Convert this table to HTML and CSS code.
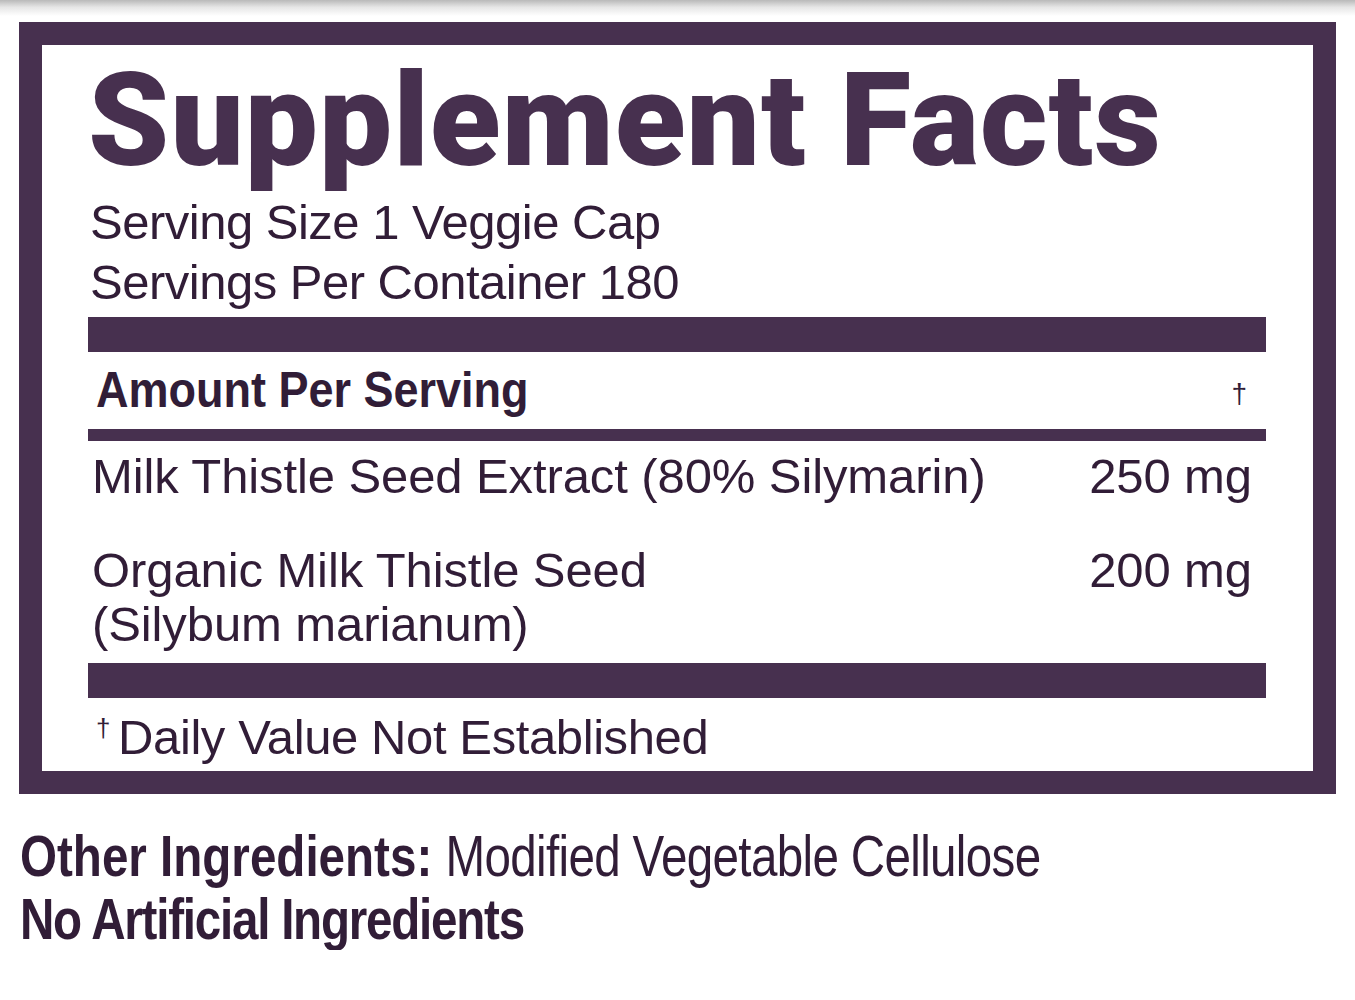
FILE: index.html
```html
<!DOCTYPE html>
<html lang="en">
<head>
<meta charset="utf-8">
<title>Supplement Facts</title>
<link rel="stylesheet" href="styles.css">
</head>
<body>
<div class="shade"></div>
<section class="panel">
  <h1 class="title">Supplement Facts</h1>
  <div class="serving">
    <p>Serving Size 1 Veggie Cap</p>
    <p>Servings Per Container 180</p>
  </div>
  <div class="bar thick"></div>
  <div class="amount-row">
    <span class="amount">Amount Per Serving</span>
    <span class="dagger">†</span>
  </div>
  <div class="bar thin"></div>
  <div class="row first">
    <span class="name">Milk Thistle Seed Extract (80% Silymarin)</span>
    <span class="qty">250 mg</span>
  </div>
  <div class="row second">
    <span class="name">Organic Milk Thistle Seed<br>(Silybum marianum)</span>
    <span class="qty">200 mg</span>
  </div>
  <div class="bar thick lower"></div>
  <p class="foot"><span class="sup">†</span>Daily Value Not Established</p>
</section>
<div class="other">
  <p><b>Other Ingredients:</b> <span class="reg">Modified Vegetable Cellulose</span></p>
  <p><b class="noart">No Artificial Ingredients</b></p>
</div>
</body>
</html>
```
FILE: styles.css
```css
html, body {
  margin: 0;
  padding: 0;
  background: #ffffff;
}
body {
  font-family: "Liberation Sans", Arial, sans-serif;
  color: #311d37;
}
p { margin: 0; }
.shade {
  height: 16px;
  background: linear-gradient(to bottom, #b9b9b9 0%, #e6e6e6 45%, #ffffff 100%);
}
.panel {
  margin: 6px 19px 0 19px;
  border: 23px solid #47304f;
  padding: 0 47px 7px 46px;
}
.title {
  margin: 0;
  padding-top: 4px;
  height: 143px;
  font-family: Roboto, "Liberation Sans", sans-serif;
  font-weight: 900;
  font-size: 130px;
  line-height: 143px;
  color: #47304f;
  letter-spacing: 1px;
  white-space: nowrap;
}
.serving {
  font-size: 49px;
  line-height: 60px;
  padding-left: 2px;
  letter-spacing: -0.5px;
}
.bar { background: #47304f; }
.bar.thick { height: 35px; margin-top: 5px; }
.bar.thick.lower { margin-top: 12px; }
.bar.thin { height: 12px; }
.amount-row {
  height: 77px;
  display: flex;
  justify-content: space-between;
  align-items: baseline;
  padding: 0 19px 0 8px;
}
.amount {
  display: inline-block;
  font-weight: 700;
  font-size: 50px;
  line-height: 77px;
  transform: scaleX(0.9);
  transform-origin: left center;
}
.dagger {
  font-size: 28px;
  line-height: 77px;
  position: relative;
  top: -4px;
}
.row {
  display: flex;
  justify-content: space-between;
  font-size: 49px;
  line-height: 54px;
  padding: 0 14px 0 4px;
  letter-spacing: -0.1px;
}
.row.first { margin-top: 8px; }
.row.second { margin-top: 40px; }
.foot {
  margin-top: 12px;
  height: 54px;
  font-size: 49px;
  line-height: 54px;
  padding-left: 8px;
  letter-spacing: -0.4px;
}
.sup {
  font-size: 26px;
  line-height: 0;
  position: relative;
  top: -17px;
  margin-right: 8px;
}
.other {
  margin-top: 30px;
  padding-left: 20px;
  font-size: 58px;
  line-height: 63px;
}
.other p {
  transform: scaleX(0.82);
  transform-origin: left center;
  white-space: nowrap;
}
.other b { font-weight: 700; }
.other .reg { font-weight: 400; letter-spacing: -0.8px; }
.other .noart { letter-spacing: -1.5px; }
```
